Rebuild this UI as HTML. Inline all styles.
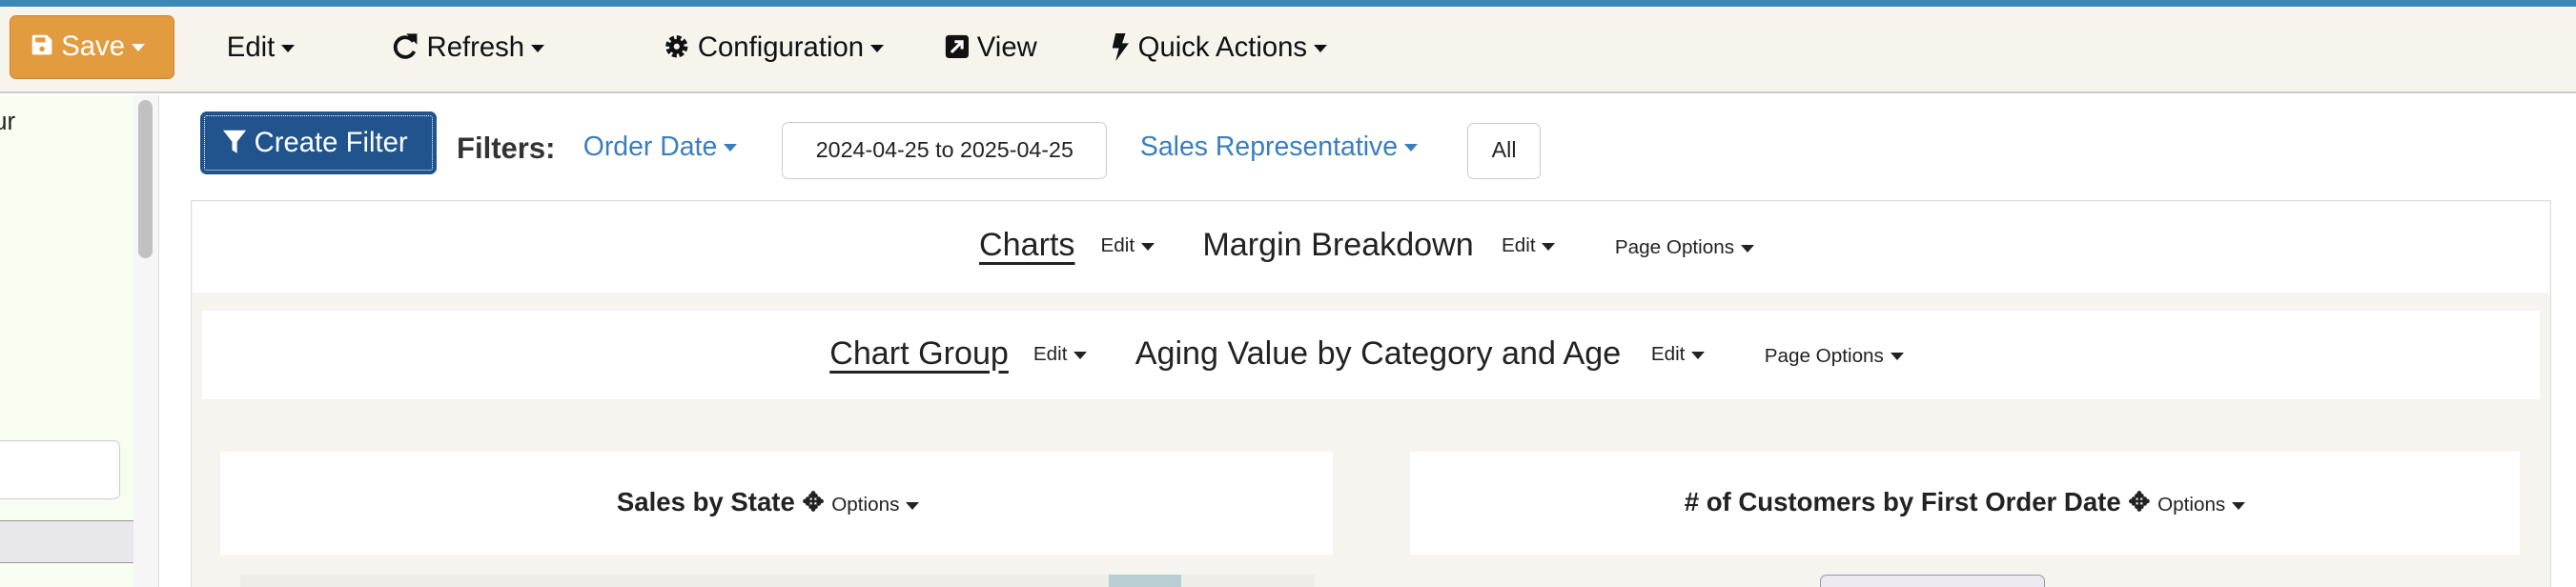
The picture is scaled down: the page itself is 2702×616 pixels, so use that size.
<!DOCTYPE html>
<html><head><meta charset="utf-8"><style>
*{box-sizing:border-box;margin:0;padding:0}
html,body{width:2702px;height:616px;overflow:hidden;background:#fff}
#w{zoom:1.7232;width:1568px;height:358px;position:relative;font-family:"Liberation Sans",sans-serif;color:#222;overflow:hidden}
.a{position:absolute;white-space:nowrap}
.c{display:inline-block;width:0;height:0;border-left:4.5px solid transparent;border-right:4.5px solid transparent;border-top:5px solid currentColor;vertical-align:middle;margin-left:4px}
.tb{font-size:17px;top:19px;color:#111}
.u{text-decoration:underline;text-underline-offset:4px}
.h{font-size:19.8px}
</style></head><body><div id="w">
<div class="a" style="left:0;top:0;width:1568px;height:4px;background:#3a87b8"></div>
<div class="a" style="left:0;top:4px;width:1568px;height:53px;background:#f7f4ee;border-bottom:1.5px solid #ccc"></div>
<div class="a" style="left:6px;top:9px;width:100px;height:39px;background:#e29b3e;border:1px solid #c98230;border-radius:4px;color:#fff;font-size:17px;line-height:37px;padding-left:12px">
<svg width="14" height="14" viewBox="0 0 14 14" style="vertical-align:-1px"><path d="M1 2a1 1 0 0 1 1-1h8l3 3v8a1 1 0 0 1-1 1H2a1 1 0 0 1-1-1z" fill="#fff"/><rect x="3" y="2.5" width="6" height="3" fill="#e29b3e"/><circle cx="7" cy="9.5" r="1.6" fill="#e29b3e"/></svg> Save<span class="c"></span></div>
<div class="a tb" style="left:138px">Edit<span class="c"></span></div>
<div class="a tb" style="left:239px"><svg width="16" height="16" viewBox="0 0 16 16" style="vertical-align:-2px"><path d="M12.5 5A6 6 0 1 0 13 11" fill="none" stroke="#111" stroke-width="2.2"/><path d="M10 1h4v4z" fill="#111" stroke="#111" stroke-width="1.5"/></svg> Refresh<span class="c"></span></div>
<div class="a tb" style="left:404px"><svg width="16" height="16" viewBox="0 0 16 16" style="vertical-align:-2px"><circle cx="8" cy="8" r="5" fill="none" stroke="#111" stroke-width="3.5" stroke-dasharray="2.5 1.4"/><circle cx="8" cy="8" r="4.5" fill="#111"/><circle cx="8" cy="8" r="1.8" fill="#f7f4ee"/></svg> Configuration<span class="c"></span></div>
<div class="a tb" style="left:575px"><svg width="15" height="15" viewBox="0 0 15 15" style="vertical-align:-2px"><rect x="0.5" y="0.5" width="14" height="14" rx="2" fill="#111"/><path d="M4 11L10 5M6 4.5h4.5V9" stroke="#fff" stroke-width="1.8" fill="none"/></svg> View</div>
<div class="a tb" style="left:676px"><svg width="12" height="17" viewBox="0 0 12 17" style="vertical-align:-3px"><path d="M3 0h6L7 6h4L3 17l2-8H1z" fill="#111"/></svg> Quick Actions<span class="c"></span></div>
<div class="a" style="left:0;top:58px;width:81px;height:300px;background:#f8fdf2"></div>
<div class="a" style="left:81px;top:58px;width:16px;height:300px;background:#f6f6f6;border-right:1px solid #ddd"></div>
<div class="a" style="left:84px;top:61px;width:9px;height:96px;background:#c1c1c1;border-radius:5px"></div>
<div class="a" style="left:-4px;top:66px;font-size:15px">ur</div>
<div class="a" style="left:-6px;top:268px;width:79px;height:36px;background:#fff;border:1px solid #ccc;border-radius:4px"></div>
<div class="a" style="left:0;top:317px;width:81px;height:26px;background:#e8e8ec;border-top:1px solid #999;border-bottom:1px solid #999"></div>
<div class="a" style="left:122px;top:68px;width:144px;height:38px;background:#21548d;border-radius:4px;outline:1px dotted #fff;outline-offset:-3px;color:#fff;font-size:17px;line-height:38px;padding-left:14px"><svg width="14" height="16" viewBox="0 0 14 16" style="vertical-align:-2px"><path d="M0 1h14L8.5 8v7L5.5 13V8z" fill="#fff"/></svg> Create Filter</div>
<div class="a" style="left:278px;top:80px;font-size:18px;font-weight:bold;color:#333">Filters:</div>
<div class="a" style="left:355px;top:80px;font-size:16.5px;color:#3a7ebf">Order Date<span class="c"></span></div>
<div class="a" style="left:476px;top:74px;width:198px;height:35px;border:1px solid #ccc;border-radius:4px;font-size:13.5px;line-height:33px;text-align:center;color:#222">2024-04-25 to 2025-04-25</div>
<div class="a" style="left:694px;top:80px;font-size:16.5px;color:#3a7ebf">Sales Representative<span class="c"></span></div>
<div class="a" style="left:893px;top:75px;width:45px;height:34px;border:1px solid #ccc;border-radius:4px;font-size:13.5px;line-height:32px;text-align:center">All</div>
<div class="a" style="left:116px;top:122px;width:1437px;height:240px;background:#f6f4ee;border:1px solid #ddd"></div>
<div class="a" style="left:117px;top:123px;width:1435px;height:55px;background:#fff"></div>
<div class="a h" style="left:596px;top:138px"><span class="u">Charts</span></div>
<div class="a" style="left:670px;top:143px;font-size:12px">Edit<span class="c"></span></div>
<div class="a h" style="left:732px;top:138px">Margin Breakdown</div>
<div class="a" style="left:914px;top:143px;font-size:12px">Edit<span class="c"></span></div>
<div class="a" style="left:983px;top:144px;font-size:12px">Page Options<span class="c"></span></div>
<div class="a" style="left:123px;top:189px;width:1423px;height:54px;background:#fff"></div>
<div class="a h" style="left:505px;top:204px"><span class="u">Chart Group</span></div>
<div class="a" style="left:629px;top:209px;font-size:12px">Edit<span class="c"></span></div>
<div class="a h" style="left:691px;top:204px">Aging Value by Category and Age</div>
<div class="a" style="left:1005px;top:209px;font-size:12px">Edit<span class="c"></span></div>
<div class="a" style="left:1074px;top:210px;font-size:12px">Page Options<span class="c"></span></div>
<div class="a" style="left:134px;top:275px;width:677px;height:63px;background:#fff;text-align:center;padding-top:21px;font-size:16px;font-weight:bold"><span style="margin-left:-10px">Sales by State ✥ <span style="font-weight:normal;font-size:12px">Options<span class="c"></span></span></span></div>
<div class="a" style="left:858px;top:275px;width:676px;height:63px;background:#fff;text-align:center;padding-top:21px;font-size:16px;font-weight:bold"># of Customers by First Order Date ✥ <span style="font-weight:normal;font-size:12px">Options<span class="c"></span></span></div>
<div class="a" style="left:146px;top:350px;width:654px;height:10px;background:#eeede8"></div>
<div class="a" style="left:675px;top:350px;width:44px;height:10px;background:#b9ced2"></div>
<div class="a" style="left:1108px;top:350px;width:137px;height:12px;background:#eceaf0;border:1px solid #999;border-radius:4px"></div>
</div></body></html>
